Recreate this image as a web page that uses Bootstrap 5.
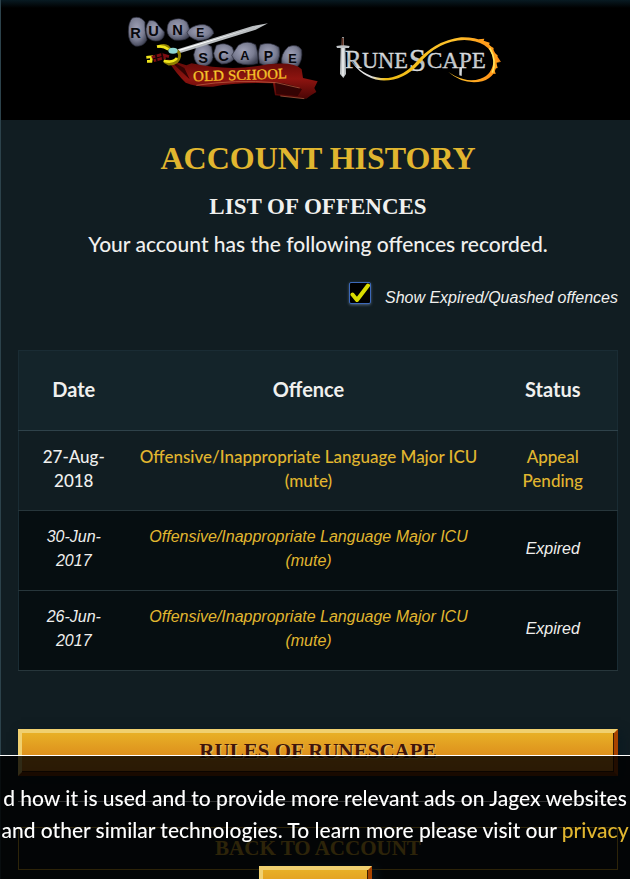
<!DOCTYPE html>
<html lang="en">
<head>
<meta charset="utf-8">
<meta name="viewport" content="width=device-width, initial-scale=1">
<title>Account History</title>
<link href="https://cdn.jsdelivr.net/npm/bootstrap@5.3.0/dist/css/bootstrap.min.css" rel="stylesheet">
<style>
:root{--gold:#e1b62f;--ink:#111d22}
body{background:var(--ink);color:#f0f0ee;font-family:Lato,"Open Sans",sans-serif;font-size:16px;line-height:24px}
a{color:var(--gold);text-decoration:none}
a:hover{color:#f3d26a}
.page-shell{border-left:1px solid #2c424b;min-height:100vh}
.brand-bar{background:linear-gradient(#081a22 0,#000 8px);height:120px}
.main-area{padding:20px 12px 9px 17px}
.title-font{font-family:"Liberation Serif",serif;font-weight:700;text-transform:uppercase}
.page-title{color:var(--gold);font-size:32px;line-height:36px}
.sub-title{font-size:23px;line-height:30px}
.intro{font-size:21px;line-height:28px}
.toggle-row{font:italic 16px/24px "Liberation Sans",sans-serif;gap:14px;padding-bottom:40px}
.toggle-row .form-check-input{width:22px;height:22px;border:1px solid #3c68b8;border-radius:2px;background-color:#000;box-shadow:0 1px 3px #50647a}
.toggle-row .form-check-input:checked{background-color:#000;background-size:20px 20px;background-image:url("data:image/svg+xml,%3Csvg xmlns='http://www.w3.org/2000/svg' viewBox='0 0 20 20'%3E%3Cpath d='M2.5 11.5 7 17 18 2.5' fill='none' stroke='%23d9dc00' stroke-width='4' stroke-linecap='round' stroke-linejoin='round'/%3E%3C/svg%3E")}
.offences{--bs-table-bg:transparent;--bs-table-color:#f0f0ee;border:1px solid #1a2c34;table-layout:fixed;text-align:center;vertical-align:middle}
.offences>:not(caption)>*>*{padding:14px 8px 17px;border-bottom:1px solid #27363b;color:#f0f0ee}
.offences>thead{vertical-align:middle}
.offences>thead>tr>th{background:#14242a;font-size:20px;font-weight:700;height:80px;border-color:#2f424a}
.offences .date-col{width:110px}
.offences .status-col{width:129px}
.offences .date-cell,.offences .status-cell{padding-left:20px;padding-right:20px}
.offences .live>td{font-size:17px}
.offences .expired>td{background:#060e11;font-family:"Liberation Sans",sans-serif;font-style:italic}
.live{font-weight:500}
.btn-gold{border:4px solid;border-color:#f0d070 #a84300 #7c3200 #f0d070;border-radius:0;background:linear-gradient(#e8b026,#dc8c1c 65%,#d4801a);color:#40150a;font-size:21px;line-height:32px;height:47px;padding:2px 12px;box-shadow:inset -1px -1px 0 #3a1c00,3px 3px 10px #0a1a22;text-shadow:1px 1px 1px #f3c463}
.btn-gold:hover{color:#40150a;border-color:#f0d070 #a84300 #7c3200 #f0d070}
.rules-link{margin-top:58px}
.btn-back{border:1px solid var(--gold);border-radius:0;color:var(--gold);font-size:21px;line-height:32px;height:43px;padding:4px 12px}
.divider{border-top:1px solid #fff;opacity:1;margin:25px 0}
.cookie-bar{bottom:-34px;background:rgba(0,0,0,.8);border-top:1px solid #fff;color:#fff;font-size:21px;line-height:32px;padding-top:26px;overflow:hidden;white-space:nowrap}
.cookie-lines{display:flex;flex-direction:column;align-items:center}
.cookie-bar .btn-gold{width:113px;margin-top:20px}
</style>
<script src="https://cdn.jsdelivr.net/npm/bootstrap@5.3.0/dist/js/bootstrap.bundle.min.js"></script>
</head>
<body>
<div class="page-shell">
  <header class="brand-bar d-flex justify-content-center align-items-center">
    <a href="#oldschool" aria-label="Old School RuneScape">
      <svg class="d-block" width="200" height="120" viewBox="0 0 600 360">
        <defs>
          <radialGradient id="stone" cx=".45" cy=".4" r=".65"><stop offset="0" stop-color="#a0a2b8"/><stop offset=".6" stop-color="#7a7d92"/><stop offset="1" stop-color="#3c3f50"/></radialGradient>
          <linearGradient id="cloth" x1="0" x2="0" y1="0" y2="1"><stop offset="0" stop-color="#5c0806"/><stop offset=".5" stop-color="#8e1410"/><stop offset="1" stop-color="#4a0605"/></linearGradient>
          <linearGradient id="coin" x1="0" x2="0" y1="0" y2="1"><stop offset="0" stop-color="#ffe838"/><stop offset="1" stop-color="#eea41c"/></linearGradient>
        </defs>
        <g fill="url(#stone)" stroke="#2c2e3c" stroke-width="2">
          <path d="M34 54Q58 46 72 66Q70 90 78 120Q66 142 42 138Q22 128 22 96Q22 66 34 54Z"/>
          <path d="M84 62Q104 58 112 76L130 96Q132 116 114 122Q92 126 80 112Q68 86 84 62Z"/>
          <path d="M148 62Q178 48 198 66Q208 84 206 108Q196 124 160 120Q138 110 138 90Q138 72 148 62Z"/>
          <path d="M204 88Q224 72 252 74Q276 82 278 100Q266 122 232 122Q204 114 198 98Z"/>
          <path d="M226 138Q250 124 272 140L276 172Q272 200 240 200Q220 190 218 164Z"/>
          <path d="M286 136Q312 124 334 142L344 170Q332 192 302 192Q280 182 278 160Z"/>
          <path d="M352 136Q378 118 404 134Q414 162 410 190Q380 200 350 188Q336 178 332 166Z"/>
          <path d="M418 134Q450 124 474 142Q480 168 468 190Q440 204 416 190Q408 160 418 134Z"/>
          <path d="M502 140Q530 130 542 150Q546 182 528 202Q500 206 482 190Q478 162 502 140Z"/>
        </g>
        <path d="M170 148 395 78 441 70 404 89 178 159Z" fill="#b9bdc0"/>
        <path d="M172 149 438 71 175 153Z" fill="#fff"/>
        <path d="M138 177 196 196 212 190Q330 216 440 193Q520 184 542 208L546 234 590 244 580 264 586 276 570 286 556 296 462 286 456 250Q350 246 276 260Q226 262 194 248Q166 222 138 177Z" fill="url(#cloth)"/>
        <path d="M146 181 206 238 190 204ZM462 247Q520 254 543 268L530 288 466 282Z" fill="#340303"/>
        <path d="M226 256Q340 238 466 248L536 264M478 288 550 296" fill="none" stroke="#c46a4a" stroke-width="2"/>
        <path d="M112 140Q140 130 148 152Q176 146 176 168Q172 192 144 192L130 184" fill="none" stroke="#8d7d00" stroke-width="9"/>
        <path d="M108 140Q126 136 142 148M128 182Q156 190 168 174M76 172 92 170 90 184 78 184" fill="none" stroke="#f0e51c" stroke-width="8"/>
        <path d="M92 172 122 164 144 170M98 182 134 172" fill="none" stroke="#7c0d12" stroke-width="9"/>
        <path d="M104 162 108 184M122 158 126 180" stroke="#180406" stroke-width="5"/>
        <ellipse cx="156" cy="152" rx="14" ry="9" fill="#8ed6d2"/>
        <g font-family="Liberation Sans,sans-serif" font-weight="700" font-size="44" fill="#08080c">
          <text x="28" y="114">R</text><text x="82" y="108">U</text><text x="154" y="106">N</text><text x="226" y="111" font-size="36">E</text>
          <text x="232" y="188">S</text><text x="292" y="182">C</text><text x="358" y="180" font-size="38">A</text><text x="428" y="184" font-size="42">P</text><text x="502" y="188" font-size="38">E</text>
        </g>
        <g font-family="Liberation Serif,serif" font-size="45" fill="url(#coin)" stroke="#f2be28" stroke-width="1">
          <text x="217" y="244" transform="rotate(-2 217 244)">OLD</text><text x="322" y="241" font-size="44" transform="rotate(-2 322 241)">SCHOOL</text>
        </g>
      </svg>
    </a>
    <a href="#runescape" aria-label="RuneScape">
      <svg class="d-block" width="190" height="80" viewBox="0 0 570 240">
        <defs>
          <linearGradient id="steel" x1="0" x2="0" y1="0" y2="1"><stop offset="0" stop-color="#f4f6f8"/><stop offset=".55" stop-color="#b4babf"/><stop offset="1" stop-color="#fafafa"/></linearGradient>
          <linearGradient id="flame" x1="100" x2="530" y1="0" y2="0" gradientUnits="userSpaceOnUse"><stop offset="0" stop-color="#eee"/><stop offset=".12" stop-color="#ddd"/><stop offset=".22" stop-color="#eebc12"/><stop offset=".7" stop-color="#ffc22c"/><stop offset="1" stop-color="#ff8b14"/></linearGradient>
        </defs>
        <g font-family="Liberation Serif,serif" fill="url(#steel)" stroke="#d4d8dc" stroke-width="1">
          <text x="71" y="144" font-size="76">R</text>
          <text x="123" y="144" font-size="67">UNE</text>
          <text x="263" y="152" font-size="94">S</text>
          <text x="318" y="144" font-size="69">CAPE</text>
        </g>
        <path d="M415 142 415 166 422 168 423 142Z" fill="#d4d8db"/>
        <path d="M86 116Q124 168 180 174Q236 178 280 132Q340 62 420 52Q500 50 522 98L540 126 526 122Q530 168 484 184Q428 196 382 156L402 168Q442 188 478 176Q516 164 518 116Q504 62 430 60Q350 62 294 132Q244 186 178 181Q120 172 86 116Z" fill="url(#flame)"/>
        <path d="M472 58 490 56 488 62 506 68 504 76 518 84 516 96 530 106 526 120 538 126 526 128 530 144 520 146 524 162 510 160 500 176Q522 150 518 116Q510 76 472 58Z" fill="#ff9e1b"/>
        <path d="M506 84Q528 122 514 158" fill="none" stroke="#ffe35b" stroke-width="5"/>
        <path d="M63 52 69 52 69 76 86 78 84 84 73 84 75 162 67 174 57 162 59 84 48 84 46 78 62 76Z" fill="#bfc3c6"/>
        <path d="M65 54 65 76" stroke="#5c3022" stroke-width="6"/><path d="M66 84 66 168" stroke="#f2f2f2" stroke-width="4"/>
      </svg>
    </a>
  </header>

  <main class="main-area">
    <h1 class="title-font page-title text-center mb-3">Account History</h1>
    <h2 class="title-font sub-title text-center mb-2">List of Offences</h2>
    <p class="intro live text-center mb-4">Your account has the following offences recorded.</p>

    <div class="toggle-row d-flex justify-content-end align-items-start">
      <input class="form-check-input m-0 flex-shrink-0" type="checkbox" id="showExpired" checked>
      <label class="pt-1" for="showExpired">Show Expired/Quashed offences</label>
    </div>

    <table class="table offences mb-0">
      <thead>
        <tr><th class="date-col" scope="col">Date</th><th scope="col">Offence</th><th class="status-col" scope="col">Status</th></tr>
      </thead>
      <tbody>
        <tr class="live">
          <td class="date-cell">27-Aug-2018</td>
          <td><a href="#offence-1">Offensive/Inappropriate Language Major ICU (mute)</a></td>
          <td class="status-cell"><a href="#appeal">Appeal Pending</a></td>
        </tr>
        <tr class="expired">
          <td class="date-cell">30-Jun-2017</td>
          <td><a href="#offence-2">Offensive/Inappropriate Language Major ICU (mute)</a></td>
          <td class="status-cell">Expired</td>
        </tr>
        <tr class="expired">
          <td class="date-cell">26-Jun-2017</td>
          <td><a href="#offence-3">Offensive/Inappropriate Language Major ICU (mute)</a></td>
          <td class="status-cell">Expired</td>
        </tr>
      </tbody>
    </table>

    <a class="btn btn-gold title-font d-block rules-link" href="#rules">Rules of RuneScape</a>
    <hr class="divider">
    <a class="btn btn-back title-font d-block" href="#account">Back to Account</a>
  </main>
</div>

<div class="cookie-bar position-fixed start-0 end-0 text-center live">
  <div class="cookie-lines">
    <span>d how it is used and to provide more relevant ads on Jagex websites</span>
    <span>and other similar technologies. To learn more please visit our <a href="#privacy">privacy</a></span>
  </div>
  <button class="btn btn-gold" type="button" aria-label="Accept cookies"></button>
</div>
</body>
</html>
